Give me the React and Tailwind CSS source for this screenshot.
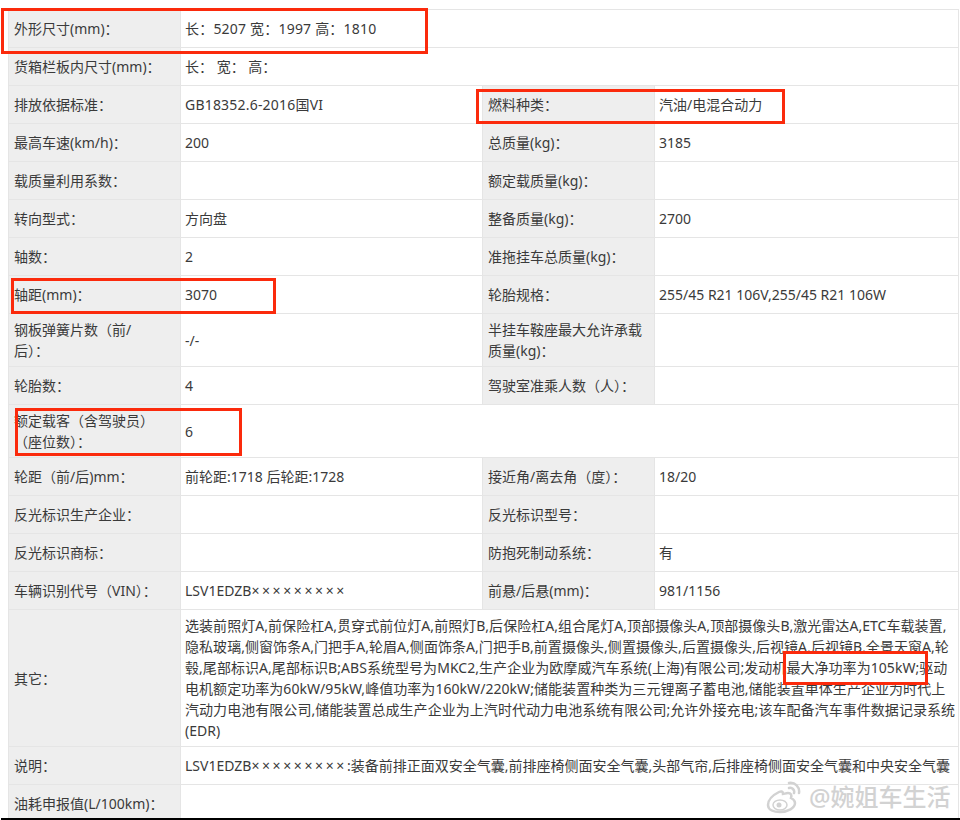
const font = { fontFamily: '"Noto Sans", "Noto Sans CJK SC", sans-serif' };

function L({ children }) {
  return <td className="px-[5px] bg-[#eeeeee] border border-[#e5e5e5] align-middle">{children}</td>;
}
function V({ children, span }) {
  return <td colSpan={span} className="pl-[4px] pr-[2px] border border-[#e5e5e5] align-middle">{children}</td>;
}
function R({ h = 38, children }) {
  return <tr style={{ height: h }}>{children}</tr>;
}
function Box({ className }) {
  return <div className={`absolute border-[3px] border-[#fb2a0c] ${className}`} />;
}
function X() {
  return <span className="tracking-[2.6px]">×××××××××</span>;
}

export default function App() {
  return (
    <div className="relative w-[960px] h-[820px] bg-white overflow-hidden text-[14px] leading-[21px] text-[#3a3a3a]" style={font}>
      <div className="pt-[9px] pl-[8px]">
        <table className="border-collapse table-fixed w-[950px]">
          <colgroup>
            <col className="w-[172px]" />
            <col className="w-[302px]" />
            <col className="w-[172px]" />
            <col className="w-[304px]" />
          </colgroup>
          <tbody>
            <R><L>外形尺寸(mm)：</L><V span={3}><span className="tracking-[0.2px]">长：5207 宽：1997 高：1810</span></V></R>
            <R><L>货箱栏板内尺寸(mm)：</L><V span={3}>长： 宽： 高：</V></R>
            <R><L>排放依据标准：</L><V><span className="tracking-[0.2px]">GB18352.6-2016国VI</span></V><L>燃料种类：</L><V>汽油/电混合动力</V></R>
            <R><L>最高车速(km/h)：</L><V>200</V><L>总质量(kg)：</L><V>3185</V></R>
            <R><L>载质量利用系数：</L><V></V><L>额定载质量(kg)：</L><V></V></R>
            <R><L>转向型式：</L><V>方向盘</V><L>整备质量(kg)：</L><V>2700</V></R>
            <R><L>轴数：</L><V>2</V><L>准拖挂车总质量(kg)：</L><V></V></R>
            <R><L>轴距(mm)：</L><V>3070</V><L>轮胎规格：</L><V>255/45 R21 106V,255/45 R21 106W</V></R>
            <R h={53}><L>钢板弹簧片数（前/<br />后）：</L><V>-/-</V><L>半挂车鞍座最大允许承载质量(kg)：</L><V></V></R>
            <R><L>轮胎数：</L><V>4</V><L>驾驶室准乘人数（人）：</L><V></V></R>
            <R h={53}><L>额定载客（含驾驶员）<br />（座位数）：</L><V span={3}>6</V></R>
            <R><L>轮距（前/后)mm：</L><V>前轮距:1718 后轮距:1728</V><L>接近角/离去角（度）：</L><V>18/20</V></R>
            <R><L>反光标识生产企业：</L><V></V><L>反光标识型号：</L><V></V></R>
            <R><L>反光标识商标：</L><V></V><L>防抱死制动系统：</L><V>有</V></R>
            <R><L>车辆识别代号（VIN）：</L><V>LSV1EDZB<X /></V><L>前悬/后悬(mm)：</L><V>981/1156</V></R>
            <R h={137}>
              <L>其它：</L>
              <V span={3}><span className="tracking-[0.05px]">选装前照灯A,前保险杠A,贯穿式前位灯A,前照灯B,后保险杠A,组合尾灯A,顶部摄像头A,顶部摄像头B,激光雷达A,ETC车载装置,隐私玻璃,侧窗饰条A,门把手A,轮眉A,侧面饰条A,门把手B,前置摄像头,侧置摄像头,后置摄像头,后视镜A,后视镜B,全景天窗A,轮毂,尾部标识A,尾部标识B;ABS系统型号为MKC2,生产企业为欧摩威汽车系统(上海)有限公司;发动机最大净功率为105kW;驱动电机额定功率为60kW/95kW,峰值功率为160kW/220kW;储能装置种类为三元锂离子蓄电池,储能装置单体生产企业为时代上汽动力电池有限公司,储能装置总成生产企业为上汽时代动力电池系统有限公司;允许外接充电;该车配备汽车事件数据记录系统(EDR)</span></V>
            </R>
            <R><L>说明：</L><V span={3}>LSV1EDZB<X />:装备前排正面双安全气囊,前排座椅侧面安全气囊,头部气帘,后排座椅侧面安全气囊和中央安全气囊</V></R>
            <R><L>油耗申报值(L/100km)：</L><V span={3}></V></R>
          </tbody>
        </table>
      </div>
      <Box className="left-[1px] top-[8px] w-[427px] h-[46px]" />
      <Box className="left-[476px] top-[89px] w-[309px] h-[35px]" />
      <Box className="left-[11px] top-[278px] w-[265px] h-[36px]" />
      <Box className="left-[15px] top-[408px] w-[227px] h-[48px]" />
      <Box className="left-[783px] top-[651px] w-[145px] h-[34px]" />
      <div className="absolute left-[766px] top-[780px] flex items-center gap-[8px] text-[#d2d2d2] text-[24px] font-medium leading-[34px] [text-shadow:0_0_3px_#ffffff,0_0_3px_#ffffff]">
        <svg width="35" height="34" viewBox="0 0 35 34" fill="none" stroke="#d2d2d2" strokeWidth="2.5" strokeLinecap="round">
          <path d="M13 12c-6 3-11 8-11 13 0 5 6 7 12 7 8 0 15-4 15-9 0-3-2-4-4-5 1-3 0-5-3-5-2 0-4 1-5 1 0-3-2-3-4-2z" fill="#ffffff" />
          <ellipse cx="14" cy="25" rx="7" ry="5" fill="#ffffff" strokeWidth="1.5" />
          <circle cx="13" cy="25" r="2.5" fill="#d2d2d2" stroke="none" />
          <path d="M23 8c3-1 6 2 5 5M23 3c6-1 11 4 10 10" />
        </svg>
        <span>@婉姐车生活</span>
      </div>
      <div className="absolute left-[1px] right-0 bottom-0 h-[2px] bg-black" />
    </div>
  );
}
